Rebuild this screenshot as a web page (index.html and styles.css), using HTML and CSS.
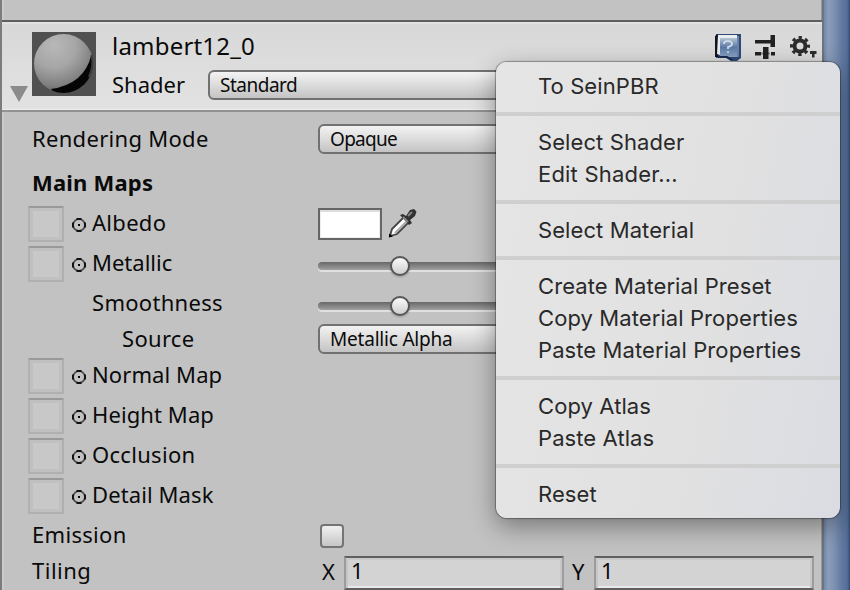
FILE: index.html
```html
<!DOCTYPE html>
<html lang="en">
<head>
<meta charset="utf-8">
<title>Material Inspector</title>
<link rel="stylesheet" href="styles.css">
</head>
<body>
<svg class="defs" width="0" height="0">
  <symbol id="picker" viewBox="0 0 14 14">
    <circle cx="7" cy="7" r="5.9" fill="none" stroke="#4d4d4d" stroke-width="1.7"/>
    <path d="M4.500 1h5M4.500 13h5M1 4.500v5M13 4.500v5" stroke="#111" stroke-width="2"/>
    <path d="M6 6h2v2H6z" fill="#000"/>
  </symbol>
</svg>
<div class="window">
  <main class="inspector">
    <header class="header">
      <svg class="fold" width="18" height="16" viewBox="0 0 18 16"><path d="M0 0h18L9 16z" fill="#8b8b8b"/></svg>
      <svg class="thumb" width="64" height="64" viewBox="0 0 64 64">
        <defs>
          <radialGradient id="ball" cx=".34" cy=".2" r=".82">
            <stop offset="0" stop-color="#b8b8b8"/><stop offset=".45" stop-color="#a6a6a6"/>
            <stop offset=".82" stop-color="#808080"/><stop offset="1" stop-color="#5c5c5c"/>
          </radialGradient>
          <clipPath id="disc"><circle cx="31.500" cy="31.500" r="29.500"/></clipPath>
        </defs>
        <rect width="64" height="64" fill="#505050"/>
        <circle cx="31.500" cy="31.500" r="29.500" fill="url(#ball)"/>
        <path clip-path="url(#disc)" d="M59 24Q56 37 46 46Q35 55 19 57L25 64H64V24z" fill="#050505"/>
        <path d="M59.500 23Q62 34 57 45" fill="none" stroke="#3c3c3c" stroke-width="2"/>
      </svg>
      <div class="identity">
        <div class="title-row">
          <h1 class="name">lambert12_0</h1>
          <div class="tools">
            <svg width="28" height="29" viewBox="0 0 28 29">
              <defs><linearGradient id="book" x1="0" y1="0" x2="0" y2="1"><stop offset="0" stop-color="#b4c2d2"/><stop offset=".5" stop-color="#5d7aa6"/><stop offset="1" stop-color="#8aa4c4"/></linearGradient></defs>
              <path d="M2 1h25v24l-4 3h-6l-5-3H2z" fill="#304a78"/>
              <path d="M1 3v21h3V1z" fill="#101723"/>
              <path d="M4 2h19v3H6v17l-3-1z" fill="#e9edf0"/>
              <path d="M6 5h17v19H6z" fill="url(#book)"/>
              <path d="M23 3h2v21h-2z" fill="#6a84ac"/>
              <path d="M10 11q0-3 4-3t4 3q0 2-4 3v2M13 19h2" fill="none" stroke="#d5e2f0" stroke-width="1.700"/>
              <path d="M4 24h9l5 3" fill="none" stroke="#182c50" stroke-width="2"/>
            </svg>
            <svg width="22" height="24" viewBox="0 0 22 24" fill="#222">
              <path d="M0 5h16v3.500H0zM15.500 0h4.500v12h-4.500zM0 17h6v3.500H0zM8 12h5.500v12H8zM16 17h4v3.500h-4z"/><path d="M6 17.500h9v2H6z" opacity=".45"/>
            </svg>
            <svg width="27" height="23" viewBox="0 0 27 23">
              <circle cx="10" cy="10" r="5.500" fill="none" stroke="#2c2c2c" stroke-width="4"/>
              <circle cx="10" cy="10" r="8.400" fill="none" stroke="#2c2c2c" stroke-width="3.200" stroke-dasharray="3.300 3.297" stroke-dashoffset="1.650"/>
              <path d="M20 15h6.500v3h-2v3.500h-2.500V18h-2z" fill="#2c2c2c"/>
            </svg>
          </div>
        </div>
        <div class="shader-row">
          <span class="label shader">Shader</span>
          <div class="popup"><span class="t-standard">Standard</span></div>
        </div>
      </div>
    </header>
    <section class="props">
      <div class="row mode"><span class="label">Rendering Mode</span><div class="popup"><span class="t-opaque">Opaque</span></div></div>
      <h2 class="row heading">Main Maps</h2>
      <div class="row map"><span class="slot"></span><svg class="pick"><use href="#picker"/></svg><span class="label">Albedo</span>
        <div class="color"><span class="swatch"></span>
          <svg width="30" height="30" viewBox="0 0 30 30">
            <path d="M2 28l2-7L16 9l5 5L9 26z" fill="#fff" stroke="#444" stroke-width="1.800"/>
            <path d="M7 25L18 14" stroke="#aaa" stroke-width="2"/>
            <path d="M1 29.500v-4l4 3z" fill="#000"/>
            <path d="M12 7l3-1 3 2 4-6 4-1 2.500 2.500L27 8l-5 4 2 3-3 2z" fill="#303030"/>
            <path d="M20 8l4-4M15 9l5 5" stroke="#858585" stroke-width="2"/>
          </svg>
        </div>
      </div>
      <div class="row map"><span class="slot"></span><svg class="pick"><use href="#picker"/></svg><span class="label w-metallic">Metallic</span><div class="slider"><i class="knob"></i></div></div>
      <div class="row smooth"><span class="label">Smoothness</span><div class="slider"><i class="knob"></i></div></div>
      <div class="row source"><span class="label">Source</span><div class="popup"><span class="t-alpha">Metallic Alpha</span></div></div>
      <div class="row map"><span class="slot"></span><svg class="pick"><use href="#picker"/></svg><span class="label w-maps">Normal Map</span></div>
      <div class="row map"><span class="slot"></span><svg class="pick"><use href="#picker"/></svg><span class="label w-maps">Height Map</span></div>
      <div class="row map"><span class="slot"></span><svg class="pick"><use href="#picker"/></svg><span class="label">Occlusion</span></div>
      <div class="row map"><span class="slot"></span><svg class="pick"><use href="#picker"/></svg><span class="label w-maps">Detail Mask</span></div>
      <div class="row emission"><span class="label">Emission</span><span class="check"></span></div>
      <div class="row tiling"><span class="label w-tiling">Tiling</span><div class="vector"><span class="axis">X</span><span class="field">1</span><span class="axis">Y</span><span class="field">1</span></div></div>
    </section>
  </main>
  <aside class="desktop"></aside>
  <nav class="menu">
    <div class="item">To SeinPBR</div>
    <hr>
    <div class="item">Select Shader</div>
    <div class="item m-edit">Edit Shader...</div>
    <hr>
    <div class="item">Select Material</div>
    <hr>
    <div class="item">Create Material Preset</div>
    <div class="item">Copy Material Properties</div>
    <div class="item">Paste Material Properties</div>
    <hr>
    <div class="item">Copy Atlas</div>
    <div class="item">Paste Atlas</div>
    <hr>
    <div class="item">Reset</div>
  </nav>
</div>
</body>
</html>
```
FILE: styles.css
```css
* { box-sizing: border-box; }
body { margin: 0; }
.defs { position: absolute; }
.window {
  position: relative; display: flex; width: 850px; height: 590px; overflow: hidden;
  font: 22px/1 "Noto Sans", sans-serif; color: #0a0a0a; white-space: nowrap;
}
.inspector {
  width: 824px; height: 590px; padding-top: 20px; background: #c2c2c2;
  border-left: 2px solid #7c7c7c; border-right: 2px solid #6f747a;
  box-shadow: inset 2px 0 #cacaca, inset -1px 0 #999;
}
.desktop { flex: 1; background: linear-gradient(90deg, #6f88ad 0, #8b9dba 4px, #7e92b2 10px, #6179a1 18px, #566f98 23px, #344b72 26px); }
.header {
  display: flex; height: 92px; padding: 10px 4px 0 8px;
  background: linear-gradient(#d8d8d8, #e2e2e2);
  border-top: 2px solid #5f5f5f; border-bottom: 2px solid #929292;
  box-shadow: inset 0 2px #e2e2e2, inset 0 -1px #ededed;
}
.fold { margin-top: 54px; flex: none; }
.thumb { margin-left: 4px; flex: none; }
.identity { flex: 1; margin-left: 16px; min-width: 0; }
.title-row { display: flex; height: 30px; justify-content: space-between; align-items: center; }
.name { margin: 0; padding-bottom: 3px; font-size: 24px; font-weight: 400; letter-spacing: .2px; }
.label { padding-bottom: 2px; letter-spacing: .3px; }
.w-metallic { letter-spacing: 0; }
.w-maps { letter-spacing: .1px; }
.w-tiling { letter-spacing: .5px; }
.tools { display: flex; gap: 13px; align-items: center; margin-right: 1px; }
.shader-row { display: flex; height: 30px; margin-top: 8px; align-items: center; }
.shader { width: 96px; letter-spacing: 0; }
.popup {
  flex: 1; height: 30px; padding-left: 10px; border: 2px solid #717171; border-radius: 6px;
  background: linear-gradient(#f3f3f3, #c4c4c4); font-size: 19px; line-height: 27px;
}
.t-standard { letter-spacing: -.5px; }
.t-opaque { letter-spacing: -.7px; }
.t-alpha { letter-spacing: -.2px; }
.props { padding: 9px 8px 0 26px; }
.row { display: flex; height: 40px; align-items: center; }
.mode { height: 36px; padding-left: 4px; }
.mode .label, .emission .label, .tiling .label { width: 286px; }
.heading { height: 36px; margin: 8px 0 2px; padding: 0 0 2px 4px; font-size: 22px; font-weight: 700; letter-spacing: .2px; }
.slot {
  width: 36px; height: 36px; margin-top: 2px; border: 2px solid #b0b0b0; border-top-color: #999;
  background: #c8c8c8; box-shadow: inset 0 0 0 3px #c0c0c0, inset 0 -3px #cfcfcf;
}
.pick { width: 14px; height: 14px; margin: 4px 6px 0 8px; }
.map .label { width: 226px; }
.color { display: flex; gap: 6px; align-items: center; }
.swatch { width: 64px; height: 32px; margin-top: 2px; border: 2px solid #666; background: #fff; box-shadow: inset 0 2px #ddd, inset 0 0 0 1px #eee; }
.slider { flex: 1; height: 8px; margin-top: 6px; border-radius: 4px; background: linear-gradient(#686868, #a0a0a0); box-shadow: 0 2px #e0e0e0; }
.knob { display: block; width: 20px; height: 20px; margin: -6px 0 0 72px; border: 2px solid #555; border-radius: 50%; background: linear-gradient(#fafafa, #cecece); box-shadow: 0 1px 2px #6668; }
.smooth { padding-left: 64px; }
.smooth .label { width: 226px; }
.source { height: 32px; padding-left: 94px; }
.source .label { width: 196px; }
.emission, .tiling { padding-left: 4px; }
.tiling { height: 32px; }
.check { width: 24px; height: 24px; margin: 2px 0 0 2px; border: 2px solid #747474; border-radius: 4px; background: linear-gradient(#f0f0f0, #c6c6c6); }
.vector { display: grid; grid-template-columns: 22px 220px 22px 220px; column-gap: 4px; margin: 3px 0 0; align-items: center; }
.axis { padding: 0 0 4px 4px; }
.field {
  height: 34px; padding: 0 0 0 5px; line-height: 25px; background: #d3d3d3;
  border: 2px solid #9c9c9c; border-top-color: #5f5f5f; border-bottom-color: #5f5f5f;
  box-shadow: inset 0 2px #c9c9c9, inset 2px 0 #c6c6c6, inset -2px 0 #c6c6c6, inset 0 -2px #e9e9e9;
}
.menu {
  position: absolute; left: 496px; top: 62px; width: 344px; height: 456px; padding: 8px 0;
  border-radius: 11px; background: linear-gradient(100deg, #e5e5e5 0, #e1e1e1 60%, #dadce2 100%);
  box-shadow: 0 0 1px 1px #0005, 0 8px 26px #0006;
  color: #292929; font-family: Inter, sans-serif; font-size: 22px; letter-spacing: .09px;
}
.m-edit { letter-spacing: .2px; }
.item { height: 32px; padding-left: 42px; line-height: 33px; }
.menu hr { height: 4px; margin: 10px 0; border: 0; background: #cfcfd0; }
```
